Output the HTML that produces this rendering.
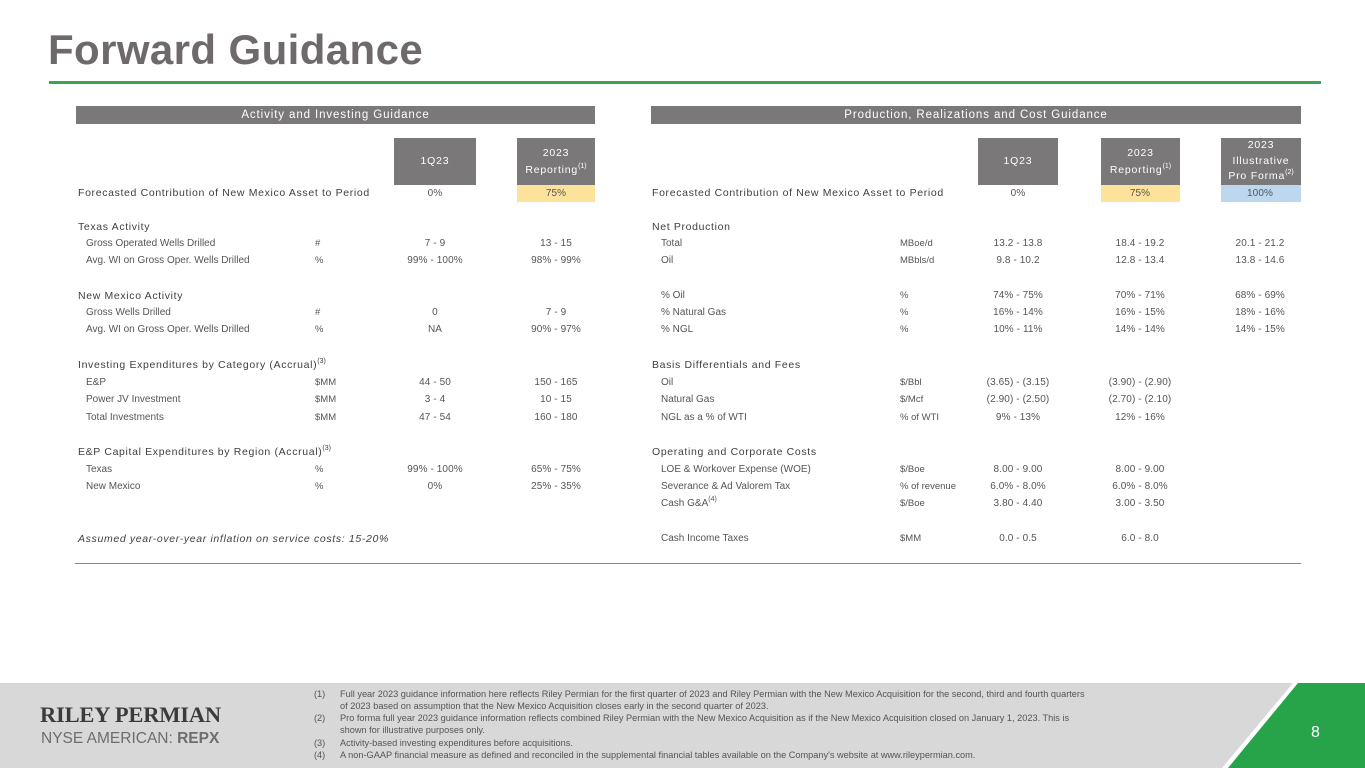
<!DOCTYPE html>
<html><head><meta charset="utf-8"><style>
body{margin:0;width:1365px;height:768px;position:relative;overflow:hidden;background:#fff;font-family:"Liberation Sans",sans-serif;color:#444}
div{position:absolute;white-space:nowrap}
.h{font-size:10.5px;letter-spacing:.65px;color:#3f3f3f}
.s{font-size:10px;color:#555}
.u{font-size:9.5px;color:#555}
.v{font-size:10px;color:#555;width:120px;text-align:center;letter-spacing:.1px}
.bar{background:#7a7878;color:#fff;font-size:11.5px;letter-spacing:.9px;text-align:center;line-height:18px;height:18px}
.box{background:#7a7878;color:#fff;font-size:10.5px;letter-spacing:.8px;text-align:center;display:flex;align-items:center;justify-content:center;line-height:17px}
.box span{display:block;position:static;white-space:nowrap}
sup{font-size:7px;vertical-align:5px;line-height:0;letter-spacing:0}
.fn{font-size:9.2px;color:#555;left:314px}
.fn span{position:absolute;left:26px}
</style></head><body>
<div style="left:48px;top:26px;font-size:42px;font-weight:bold;color:#6e6a6b;letter-spacing:.4px">Forward Guidance</div>
<div style="left:49px;top:81px;width:1272px;height:3px;background:#3aa552"></div>

<div class="bar" style="left:76px;top:106px;width:519px">Activity and Investing Guidance</div>
<div class="bar" style="left:651px;top:106px;width:650px">Production, Realizations and Cost Guidance</div>

<div class="box" style="left:394px;top:138px;width:82px;height:47px"><span>1Q23</span></div>
<div class="box" style="left:517px;top:138px;width:78px;height:47px"><span>2023<br>Reporting<sup>(1)</sup></span></div>
<div style="left:517px;top:185px;width:78px;height:17px;background:#fce29b"></div>
<div class="box" style="left:978px;top:138px;width:80px;height:47px"><span>1Q23</span></div>
<div class="box" style="left:1101px;top:138px;width:79px;height:47px"><span>2023<br>Reporting<sup>(1)</sup></span></div>
<div class="box" style="left:1221px;top:138px;width:80px;height:47px;line-height:15.5px"><span>2023<br>Illustrative<br>Pro Forma<sup>(2)</sup></span></div>
<div style="left:1101px;top:185px;width:79px;height:17px;background:#fce29b"></div>
<div style="left:1221px;top:185px;width:80px;height:17px;background:#bdd7ee"></div>

<!-- left -->
<div class="h" style="left:78px;top:187px">Forecasted Contribution of New Mexico Asset to Period</div>
<div class="v" style="left:375px;top:188px">0%</div><div class="v" style="left:496px;top:188px">75%</div>
<div class="h" style="left:78px;top:221px">Texas Activity</div>
<div class="s" style="left:86px;top:238px">Gross Operated Wells Drilled</div><div class="u" style="left:315px;top:238px">#</div><div class="v" style="left:375px;top:238px">7 - 9</div><div class="v" style="left:496px;top:238px">13 - 15</div>
<div class="s" style="left:86px;top:255px">Avg. WI on Gross Oper. Wells Drilled</div><div class="u" style="left:315px;top:255px">%</div><div class="v" style="left:375px;top:255px">99% - 100%</div><div class="v" style="left:496px;top:255px">98% - 99%</div>
<div class="h" style="left:78px;top:290px">New Mexico Activity</div>
<div class="s" style="left:86px;top:307px">Gross Wells Drilled</div><div class="u" style="left:315px;top:307px">#</div><div class="v" style="left:375px;top:307px">0</div><div class="v" style="left:496px;top:307px">7 - 9</div>
<div class="s" style="left:86px;top:324px">Avg. WI on Gross Oper. Wells Drilled</div><div class="u" style="left:315px;top:324px">%</div><div class="v" style="left:375px;top:324px">NA</div><div class="v" style="left:496px;top:324px">90% - 97%</div>
<div class="h" style="left:78px;top:359px">Investing Expenditures by Category (Accrual)<sup>(3)</sup></div>
<div class="s" style="left:86px;top:377px">E&amp;P</div><div class="u" style="left:315px;top:377px">$MM</div><div class="v" style="left:375px;top:377px">44 - 50</div><div class="v" style="left:496px;top:377px">150 - 165</div>
<div class="s" style="left:86px;top:394px">Power JV Investment</div><div class="u" style="left:315px;top:394px">$MM</div><div class="v" style="left:375px;top:394px">3 - 4</div><div class="v" style="left:496px;top:394px">10 - 15</div>
<div class="s" style="left:86px;top:412px">Total Investments</div><div class="u" style="left:315px;top:412px">$MM</div><div class="v" style="left:375px;top:412px">47 - 54</div><div class="v" style="left:496px;top:412px">160 - 180</div>
<div class="h" style="left:78px;top:446px">E&amp;P Capital Expenditures by Region (Accrual)<sup>(3)</sup></div>
<div class="s" style="left:86px;top:464px">Texas</div><div class="u" style="left:315px;top:464px">%</div><div class="v" style="left:375px;top:464px">99% - 100%</div><div class="v" style="left:496px;top:464px">65% - 75%</div>
<div class="s" style="left:86px;top:481px">New Mexico</div><div class="u" style="left:315px;top:481px">%</div><div class="v" style="left:375px;top:481px">0%</div><div class="v" style="left:496px;top:481px">25% - 35%</div>
<div class="h" style="left:78px;top:533px;font-style:italic">Assumed year-over-year inflation on service costs: 15-20%</div>

<!-- right -->
<div class="h" style="left:652px;top:187px">Forecasted Contribution of New Mexico Asset to Period</div>
<div class="v" style="left:958px;top:188px">0%</div><div class="v" style="left:1080px;top:188px">75%</div><div class="v" style="left:1200px;top:188px">100%</div>
<div class="h" style="left:652px;top:221px">Net Production</div>
<div class="s" style="left:661px;top:238px">Total</div><div class="u" style="left:900px;top:238px">MBoe/d</div><div class="v" style="left:958px;top:238px">13.2 - 13.8</div><div class="v" style="left:1080px;top:238px">18.4 - 19.2</div><div class="v" style="left:1200px;top:238px">20.1 - 21.2</div>
<div class="s" style="left:661px;top:255px">Oil</div><div class="u" style="left:900px;top:255px">MBbls/d</div><div class="v" style="left:958px;top:255px">9.8 - 10.2</div><div class="v" style="left:1080px;top:255px">12.8 - 13.4</div><div class="v" style="left:1200px;top:255px">13.8 - 14.6</div>
<div class="s" style="left:661px;top:290px">% Oil</div><div class="u" style="left:900px;top:290px">%</div><div class="v" style="left:958px;top:290px">74% - 75%</div><div class="v" style="left:1080px;top:290px">70% - 71%</div><div class="v" style="left:1200px;top:290px">68% - 69%</div>
<div class="s" style="left:661px;top:307px">% Natural Gas</div><div class="u" style="left:900px;top:307px">%</div><div class="v" style="left:958px;top:307px">16% - 14%</div><div class="v" style="left:1080px;top:307px">16% - 15%</div><div class="v" style="left:1200px;top:307px">18% - 16%</div>
<div class="s" style="left:661px;top:324px">% NGL</div><div class="u" style="left:900px;top:324px">%</div><div class="v" style="left:958px;top:324px">10% - 11%</div><div class="v" style="left:1080px;top:324px">14% - 14%</div><div class="v" style="left:1200px;top:324px">14% - 15%</div>
<div class="h" style="left:652px;top:359px">Basis Differentials and Fees</div>
<div class="s" style="left:661px;top:377px">Oil</div><div class="u" style="left:900px;top:377px">$/Bbl</div><div class="v" style="left:958px;top:377px">(3.65) - (3.15)</div><div class="v" style="left:1080px;top:377px">(3.90) - (2.90)</div>
<div class="s" style="left:661px;top:394px">Natural Gas</div><div class="u" style="left:900px;top:394px">$/Mcf</div><div class="v" style="left:958px;top:394px">(2.90) - (2.50)</div><div class="v" style="left:1080px;top:394px">(2.70) - (2.10)</div>
<div class="s" style="left:661px;top:412px">NGL as a % of WTI</div><div class="u" style="left:900px;top:412px">% of WTI</div><div class="v" style="left:958px;top:412px">9% - 13%</div><div class="v" style="left:1080px;top:412px">12% - 16%</div>
<div class="h" style="left:652px;top:446px">Operating and Corporate Costs</div>
<div class="s" style="left:661px;top:464px">LOE &amp; Workover Expense (WOE)</div><div class="u" style="left:900px;top:464px">$/Boe</div><div class="v" style="left:958px;top:464px">8.00 - 9.00</div><div class="v" style="left:1080px;top:464px">8.00 - 9.00</div>
<div class="s" style="left:661px;top:481px">Severance &amp; Ad Valorem Tax</div><div class="u" style="left:900px;top:481px">% of revenue</div><div class="v" style="left:958px;top:481px">6.0% - 8.0%</div><div class="v" style="left:1080px;top:481px">6.0% - 8.0%</div>
<div class="s" style="left:661px;top:498px">Cash G&amp;A<sup>(4)</sup></div><div class="u" style="left:900px;top:498px">$/Boe</div><div class="v" style="left:958px;top:498px">3.80 - 4.40</div><div class="v" style="left:1080px;top:498px">3.00 - 3.50</div>
<div class="s" style="left:661px;top:533px">Cash Income Taxes</div><div class="u" style="left:900px;top:533px">$MM</div><div class="v" style="left:958px;top:533px">0.0 - 0.5</div><div class="v" style="left:1080px;top:533px">6.0 - 8.0</div>

<div style="left:75px;top:563px;width:1226px;height:1px;background:#8a8a8a"></div>

<!-- footer -->
<div style="left:0;top:683px;width:1365px;height:85px;background:#d9d8d8"></div>
<svg style="position:absolute;left:0;top:683px" width="1365" height="85"><polygon points="1293,0 1365,0 1365,85 1222,85" fill="#fff"/><polygon points="1298,0 1365,0 1365,85 1228,85" fill="#27a34a"/></svg>
<div style="left:1311px;top:724px;font-size:16px;color:#fff">8</div>
<div style="left:40px;top:702px;font-family:'Liberation Serif',serif;font-weight:bold;font-size:22.5px;color:#3c3a3a;letter-spacing:-.2px">RILEY PERMIAN</div>
<div style="left:41px;top:730px;font-size:15.5px;color:#6e6c6c">NYSE AMERICAN: <b>REPX</b></div>
<div class="fn" style="top:689px">(1)<span>Full year 2023 guidance information here reflects Riley Permian for the first quarter of 2023 and Riley Permian with the New Mexico Acquisition for the second, third and fourth quarters</span></div>
<div class="fn" style="top:701px"><span>of 2023 based on assumption that the New Mexico Acquisition closes early in the second quarter of 2023.</span></div>
<div class="fn" style="top:713px">(2)<span>Pro forma full year 2023 guidance information reflects combined Riley Permian with the New Mexico Acquisition as if the New Mexico Acquisition closed on January 1, 2023. This is</span></div>
<div class="fn" style="top:725px"><span>shown for illustrative purposes only.</span></div>
<div class="fn" style="top:738px">(3)<span>Activity-based investing expenditures before acquisitions.</span></div>
<div class="fn" style="top:750px">(4)<span>A non-GAAP financial measure as defined and reconciled in the supplemental financial tables available on the Company's website at www.rileypermian.com.</span></div>
</body></html>
